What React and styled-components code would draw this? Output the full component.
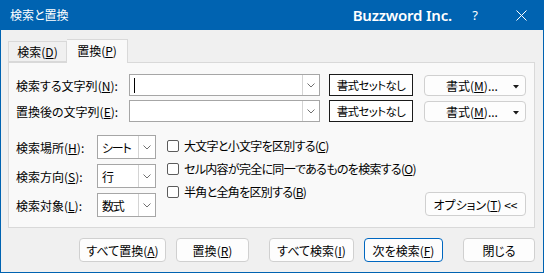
import React from 'react';
import styled, { createGlobalStyle } from 'styled-components';

const GlobalStyle = createGlobalStyle`
  html, body {
    margin: 0;
    padding: 0;
    width: 544px;
    height: 273px;
    overflow: hidden;
    background: #f0f0f0;
  }
  * { box-sizing: border-box; }
  body {
    font-family: "Noto Sans CJK JP", "Noto Sans", sans-serif;
    font-size: 12px;
    font-feature-settings: "palt";
    color: #000;
  }
`;

const Window = styled.div`
  width: 544px;
  height: 273px;
  display: flex;
  flex-direction: column;
`;

const TitleBar = styled.div`
  height: 30px;
  flex: none;
  background: #0063b1;
  color: #fff;
  display: flex;
  align-items: center;
  padding-left: 10px;
`;

const Title = styled.span`
  font-size: 12px;
  line-height: 1;
`;

const Brand = styled.span`
  margin-left: auto;
  font-family: "Noto Sans", "Open Sans", sans-serif;
  font-weight: 600;
  font-size: 15px;
  letter-spacing: -0.2px;
`;

const TitleIcon = styled.span`
  width: ${(p) => p.$w}px;
  display: flex;
  justify-content: center;
  align-items: center;
  font-family: "Noto Sans", sans-serif;
  font-size: 13px;
`;

const Frame = styled.div`
  flex: 1;
  border: 1px solid #0063b1;
  border-top: none;
  padding: 9px 8px 10px 7px;
  display: flex;
  flex-direction: column;
`;

const TabRow = styled.div`
  display: flex;
  align-items: flex-end;
  height: 23px;
`;

const Tab = styled.div`
  position: relative;
  width: ${(p) => p.$w}px;
  height: ${(p) => (p.$active ? 24 : 21)}px;
  margin-bottom: ${(p) => (p.$active ? -1 : 0)}px;
  border: 1px solid #d9d9d9;
  border-bottom: ${(p) => (p.$active ? 'none' : '1px solid #d9d9d9')};
  border-left: ${(p) => (p.$active ? 'none' : '1px solid #d9d9d9')};
  background: ${(p) => (p.$active ? '#f9f9f9' : '#f0f0f0')};
  z-index: ${(p) => (p.$active ? 1 : 0)};
  display: flex;
  align-items: center;
  justify-content: center;
  padding-bottom: ${(p) => (p.$active ? 2 : 0)}px;
`;

const Panel = styled.div`
  height: 166px;
  border: 1px solid #d9d9d9;
  background: #f9f9f9;
  padding: 11px 8px 0 7px;
  display: flex;
  flex-direction: column;
`;

const FieldRow = styled.div`
  display: flex;
  align-items: center;
  height: 22px;
  margin-bottom: 4px;
`;

const Label = styled.div`
  width: ${(p) => p.$w}px;
  flex: none;
  white-space: nowrap;
`;

const Combo = styled.div`
  width: ${(p) => p.$w}px;
  height: ${(p) => p.$h}px;
  flex: none;
  border: 1px solid #a6a6a6;
  background: #fff;
  display: flex;
  align-items: stretch;
`;

const ComboText = styled.div`
  flex: 1;
  min-width: 0;
  display: flex;
  align-items: center;
  padding-left: ${(p) => (p.$tight ? 4 : 6)}px;
  letter-spacing: ${(p) => (p.$tight ? -1.2 : -0.4)}px;
  white-space: nowrap;
  overflow: hidden;
`;

const Caret = styled.div`
  width: 1px;
  height: 15px;
  background: #000;
  margin-left: -2px;
`;

const ComboArrow = styled.div`
  width: 17px;
  flex: none;
  border-left: 1px solid #d4d4d4;
  display: flex;
  align-items: center;
  justify-content: center;
`;

const NoFormat = styled.div`
  width: 84px;
  height: 22px;
  margin-left: 9px;
  border: 1px solid #1a1a1a;
  background: #fff;
  display: flex;
  align-items: center;
  justify-content: center;
  font-size: 11.5px;
  letter-spacing: -0.6px;
  white-space: nowrap;
`;

const Button = styled.div`
  position: relative;
  width: ${(p) => p.$w}px;
  height: ${(p) => p.$h || 24}px;
  margin-left: ${(p) => p.$ml || 0}px;
  flex: none;
  border: 1px solid ${(p) => (p.$focus ? '#0067c0' : '#d0d0d0')};
  border-radius: 4px;
  background: #fdfdfd;
  display: flex;
  align-items: center;
  justify-content: center;
  padding-right: ${(p) => p.$pr || 0}px;
  white-space: nowrap;
`;

const MenuArrow = styled.svg`
  position: absolute;
  right: 6px;
  top: 9px;
`;

const OptionsArea = styled.div`
  display: flex;
  margin-top: 9px;
  flex: 1;
  padding-bottom: 10px;
`;

const SelectGrid = styled.div`
  display: grid;
  grid-template-columns: 81px 59px;
  grid-auto-rows: 24px;
  row-gap: 5px;
  align-items: center;
  align-content: start;
`;

const CheckList = styled.div`
  margin-left: 11px;
  display: flex;
  flex-direction: column;
  margin-top: -1px;
`;

const CheckRow = styled.div`
  height: 23px;
  display: flex;
  align-items: center;
  white-space: nowrap;
  letter-spacing: -0.7px;
`;

const Box = styled.div`
  width: 12px;
  height: 12px;
  border: 1px solid #5c5c5c;
  border-radius: 2px;
  background: #fff;
  margin-right: 5px;
  flex: none;
`;

const OptionsButton = styled(Button)`
  margin-left: auto;
  align-self: flex-end;
  margin-bottom: 1px;
`;

const ButtonRow = styled.div`
  display: flex;
  justify-content: flex-end;
  margin-top: 10px;
`;

const Chevron = () => (
  <svg width="8" height="5" viewBox="0 0 8 5">
    <polyline points="0.5,0.5 4,4 7.5,0.5" fill="none" stroke="#707070" strokeWidth="1" />
  </svg>
);

const selects = [
  { label: '検索場所', key: 'H', value: 'シート' },
  { label: '検索方向', key: 'S', value: '行' },
  { label: '検索対象', key: 'L', value: '数式' },
];

const checks = [
  { text: '大文字と小文字を区別する', key: 'C' },
  { text: 'セル内容が完全に同一であるものを検索する', key: 'O' },
  { text: '半角と全角を区別する', key: 'B' },
];

const buttons = [
  { text: 'すべて置換', key: 'A', w: 87, ml: 0 },
  { text: '置換', key: 'R', w: 73, ml: 10 },
  { text: 'すべて検索', key: 'I', w: 85, ml: 20 },
  { text: '次を検索', key: 'F', w: 79, ml: 10, focus: true },
  { text: '閉じる', w: 72, ml: 20 },
];

function FieldLine({ label, mk, caret }) {
  return (
    <FieldRow>
      <Label $w={113}>
        {label}(<u>{mk}</u>):
      </Label>
      <Combo $w={191} $h={22}>
        <ComboText>{caret && <Caret />}</ComboText>
        <ComboArrow>
          <Chevron />
        </ComboArrow>
      </Combo>
      <NoFormat>書式セットなし</NoFormat>
      <Button $w={102} $h={21} $ml={11} $pr={6}>
        書式(<u>M</u>)...
        <MenuArrow width="6" height="4" viewBox="0 0 6 4">
          <polygon points="0,0 6,0 3,3.5" fill="#1a1a1a" />
        </MenuArrow>
      </Button>
    </FieldRow>
  );
}

export default function App() {
  return (
    <>
      <GlobalStyle />
      <Window>
        <TitleBar>
          <Title>検索と置換</Title>
          <Brand>Buzzword Inc.</Brand>
          <TitleIcon $w={46}>?</TitleIcon>
          <TitleIcon $w={46}>
            <svg width="11" height="11" viewBox="0 0 11 11">
              <path d="M0.5 0.5 L10.5 10.5 M10.5 0.5 L0.5 10.5" stroke="#fff" strokeWidth="1" />
            </svg>
          </TitleIcon>
        </TitleBar>
        <Frame>
          <TabRow>
            <Tab $w={59}>
              検索(<u>D</u>)
            </Tab>
            <Tab $w={61} $active>
              置換(<u>P</u>)
            </Tab>
          </TabRow>
          <Panel>
            <FieldLine label="検索する文字列" mk="N" caret />
            <FieldLine label="置換後の文字列" mk="E" />
            <OptionsArea>
              <SelectGrid>
                {selects.map((s) => (
                  <React.Fragment key={s.key}>
                    <Label $w={81}>
                      {s.label}(<u>{s.key}</u>):
                    </Label>
                    <Combo $w={59} $h={24}>
                      <ComboText $tight>{s.value}</ComboText>
                      <ComboArrow>
                        <Chevron />
                      </ComboArrow>
                    </Combo>
                  </React.Fragment>
                ))}
              </SelectGrid>
              <CheckList>
                {checks.map((c) => (
                  <CheckRow key={c.key}>
                    <Box />
                    {c.text}(<u>{c.key}</u>)
                  </CheckRow>
                ))}
              </CheckList>
              <OptionsButton $w={101}>
                オプション(<u>T</u>)&nbsp;&lt;&lt;
              </OptionsButton>
            </OptionsArea>
          </Panel>
          <ButtonRow>
            {buttons.map((b) => (
              <Button key={b.text} $w={b.w} $ml={b.ml} $focus={b.focus}>
                {b.text}
                {b.key && (
                  <>
                    (<u>{b.key}</u>)
                  </>
                )}
              </Button>
            ))}
          </ButtonRow>
        </Frame>
      </Window>
    </>
  );
}
